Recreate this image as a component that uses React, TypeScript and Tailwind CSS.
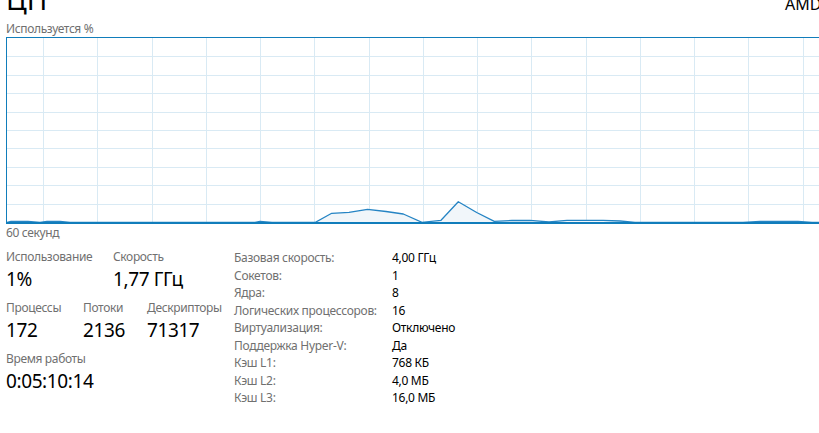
import React from 'react';

// points of the usage line, in page pixels (x, y)
const usage: [number, number][] = [
    [7, 222.5], [11, 221.5], [28, 221.5], [40, 222.5], [47, 221.5], [60, 221.5], [70, 222.5],
    [255, 222.5], [260, 221.5], [272, 222.5], [315, 222.5], [331.7, 213.3], [349, 212.3],
    [367.5, 209.3], [386, 211.5], [403.3, 214], [422, 222.3], [441, 220.3], [458.3, 201.7],
    [476.7, 212.5], [494.3, 221.3], [512, 220.5], [530, 220.3], [549, 222], [567, 220.3],
    [585, 220.3], [603, 220.3], [620, 221], [635, 222.3], [743, 222.3], [760, 221.5],
    [785, 221.3], [798, 221.5], [812, 222.3], [830, 222.3],
];

const CHART_W = 824;
const CHART_H = 184;

const UsageChart: React.FC = () => {
    const pts = usage.map(([x, y]) => [x - 7, y - 38] as const);
    const line = pts.map(([x, y]) => `${x},${y}`).join(' ');
    const area = `0,${CHART_H} ${line} ${CHART_W},${CHART_H}`;

    const vLines = Array.from({ length: 15 }, (_, k) => Math.round(36 + 54.25 * k) + 0.5);
    const hLines = Array.from({ length: 9 }, (_, k) => Math.round(18.4 * (k + 1)) + 0.5);

    return (
        <svg width={CHART_W} height={CHART_H} className="block">
            {vLines.map((x) => (
                <line key={`v${x}`} x1={x} y1={0} x2={x} y2={CHART_H} stroke="#d9eaf4" strokeWidth={1} />
            ))}
            {hLines.map((y) => (
                <line key={`h${y}`} x1={0} y1={y} x2={CHART_W} y2={y} stroke="#d9eaf4" strokeWidth={1} />
            ))}
            <polygon points={area} fill="#f1f6fa" />
            <polyline points={line} fill="none" stroke="#2584c4" strokeWidth={1.3} strokeLinejoin="round" />
        </svg>
    );
};

const Stat: React.FC<{ label: string; value: string; className?: string }> = ({ label, value, className = '' }) => (
    <div className={`flex flex-col ${className}`}>
        <div className="h-4 text-[12px] leading-4 tracking-[-0.35px] text-[#707070] whitespace-nowrap">{label}</div>
        <div className="mt-[2px] h-6 text-[19px] leading-6 tracking-[-0.4px] text-black whitespace-nowrap">{value}</div>
    </div>
);

const details: [string, string][] = [
    ['Базовая скорость:', '4,00 ГГц'],
    ['Сокетов:', '1'],
    ['Ядра:', '8'],
    ['Логических процессоров:', '16'],
    ['Виртуализация:', 'Отключено'],
    ['Поддержка Hyper-V:', 'Да'],
    ['Кэш L1:', '768 КБ'],
    ['Кэш L2:', '4,0 МБ'],
    ['Кэш L3:', '16,0 МБ'],
];

export default function App() {
    return (
        <div className="w-[819px] h-[433px] overflow-hidden bg-white font-['Noto_Sans',sans-serif]">
            {/* header, cut off at the top */}
            <div className="-mt-[15px] flex h-[28px] items-baseline pl-[6px]">
                <div className="w-[779px] shrink-0 text-[28px] leading-[28px] text-black">ЦП</div>
                <div className="whitespace-nowrap text-[16px] leading-[28px] text-black">AMD Ryzen 7 3700X 8-Core Processor</div>
            </div>

            <div className="mt-[8px] h-4 pl-[6px] text-[12px] leading-4 tracking-[-0.35px] text-[#707070]">Используется %</div>

            <div className="ml-[6px] h-[187px] w-[830px] border-t border-l border-b-2 border-[#117dbb]">
                <UsageChart />
            </div>

            <div className="mt-[1px] h-4 pl-[6px] text-[12px] leading-4 tracking-[-0.35px] text-[#707070]">60 секунд</div>

            <div className="mt-[8px] flex pl-[6px]">
                <div className="w-[228px] shrink-0">
                    <div className="flex">
                        <Stat label="Использование" value="1%" className="w-[107px]" />
                        <Stat label="Скорость" value="1,77 ГГц" />
                    </div>
                    <div className="mt-[9px] flex">
                        <Stat label="Процессы" value="172" className="w-[77px]" />
                        <Stat label="Потоки" value="2136" className="w-[64px]" />
                        <Stat label="Дескрипторы" value="71317" />
                    </div>
                    <div className="mt-[9px] flex">
                        <Stat label="Время работы" value="0:05:10:14" />
                    </div>
                </div>

                <div className="flex flex-col text-[12px] leading-[17.5px] tracking-[-0.3px]">
                    {details.map(([label, value]) => (
                        <div key={label} className="flex h-[17.5px] whitespace-nowrap">
                            <div className="w-[158px] shrink-0 text-[#707070]">{label}</div>
                            <div className="text-black">{value}</div>
                        </div>
                    ))}
                </div>
            </div>
        </div>
    );
}
